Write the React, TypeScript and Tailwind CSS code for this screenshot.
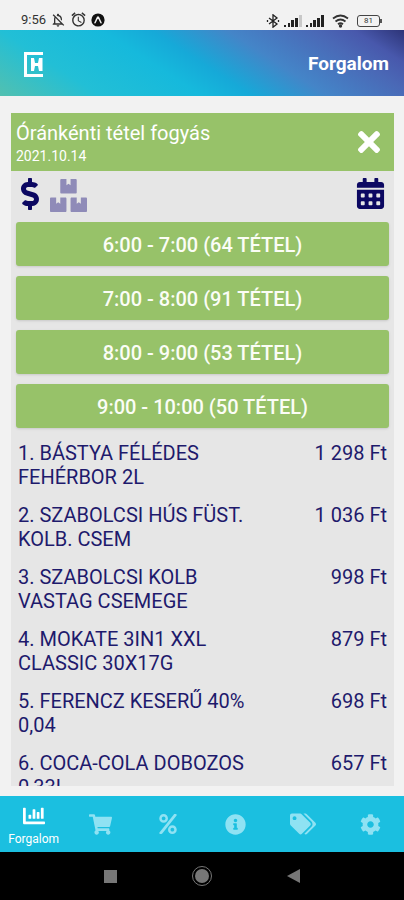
import React from "react";
import {
  FaDollarSign,
  FaBoxes,
  FaTimes,
  FaCalendarAlt,
  FaChartBar,
  FaCog,
  FaInfoCircle,
  FaPercent,
  FaShoppingCart,
  FaTags,
} from "react-icons/fa";
import { MdBluetooth, MdAlarm, MdOutlineNotificationsOff } from "react-icons/md";

const hours = [
  "6:00 - 7:00 (64 TÉTEL)",
  "7:00 - 8:00 (91 TÉTEL)",
  "8:00 - 9:00 (53 TÉTEL)",
  "9:00 - 10:00 (50 TÉTEL)",
];

const items = [
  { name: "1. BÁSTYA FÉLÉDES FEHÉRBOR 2L", price: "1 298 Ft" },
  { name: "2. SZABOLCSI HÚS FÜST. KOLB. CSEM", price: "1 036 Ft" },
  { name: "3. SZABOLCSI KOLB VASTAG CSEMEGE", price: "998 Ft" },
  { name: "4. MOKATE 3IN1 XXL CLASSIC 30X17G", price: "879 Ft" },
  { name: "5. FERENCZ KESERŰ 40% 0,04", price: "698 Ft" },
  { name: "6. COCA-COLA DOBOZOS 0,33L", price: "657 Ft" },
];

const tabs = [
  { label: "Kosár", icon: <FaShoppingCart size={23} /> },
  { label: "Kedvezmény", icon: <FaPercent size={20} /> },
  { label: "Információ", icon: <FaInfoCircle size={21} /> },
  { label: "Címkék", icon: <FaTags size={26} /> },
  { label: "Beállítások", icon: <FaCog size={21} /> },
];

function Signal({ dim }: { dim?: boolean }) {
  return (
    <svg width="18" height="12" viewBox="0 0 18 12" fill="#222" aria-hidden="true">
      <rect x="0" y="10" width="2" height="2" />
      <rect x="4" y="8" width="2" height="4" />
      <rect x="7" y="5" width="3" height="7" />
      <rect x="11" y="3" width="3" height="9" />
      <rect x="15" y="0" width="3" height="12" fill={dim ? "#c8c8c8" : "#222"} />
    </svg>
  );
}

function StatusBar() {
  return (
    <div className="flex h-[30px] shrink-0 items-end justify-between pr-[22px] pb-[2px] pl-[21px] text-[#333]">
      <div className="flex items-center">
        <span className="text-[13px] leading-4">9:56</span>
        <MdOutlineNotificationsOff size={16} className="ml-1" />
        <MdAlarm size={17} className="ml-1" />
        <svg width="14" height="14" viewBox="0 0 14 14" className="ml-1" aria-hidden="true">
          <circle cx="7" cy="7" r="6.6" fill="#111" />
          <path d="M4 9.800 6.600 4.300h.8L10 9.800" fill="none" stroke="#f2f2f2" strokeWidth="1.5" strokeLinecap="round" />
        </svg>
      </div>
      <div className="flex items-center gap-1">
        <svg width="14" height="14" viewBox="0 0 14 14" fill="none" stroke="#222" strokeWidth="1.3" aria-hidden="true">
          <path d="M3 4l8 6-4 3.200V.8L11 4l-8 6" />
          <path d="M1.500 6v2M12.500 6v2" />
        </svg>
        <Signal dim />
        <Signal />
        <svg width="17" height="14" viewBox="0 0 17 14" fill="none" stroke="#333" strokeWidth="1.8" aria-hidden="true" className="ml-1">
          <path d="M1 4.500q7.500-6 15 0M3.500 7.500q5-4 10 0M6 10.300q2.500-2 5 0" />
          <circle cx="8.500" cy="12" r=".8" fill="#333" />
        </svg>
        <div className="ml-1 flex items-center">
          <span className="flex h-3 w-[23px] items-center justify-center rounded-[3px] border border-[#444] text-[8px] leading-none">
            81
          </span>
          <span className="h-1 w-[2px] bg-[#555]" />
        </div>
      </div>
    </div>
  );
}

export default function App() {
  return (
    <div className="flex h-screen flex-col bg-[#f2f2f2] font-[Roboto,'Noto_Sans',sans-serif]">
      <StatusBar />
      <header className="flex h-[66px] shrink-0 items-center justify-between bg-[linear-gradient(33deg,#52c0b0_0%,#22bfd6_20%,#16b9dc_40%,#16a9d8_50%,#4485c8_65%,#4a68b6_82%,#4858ac_90%,#2d3478_100%)] pt-[2px] pr-[15px] pl-6">
        <button type="button" aria-label="Főoldal" className="text-white">
          <svg width="19" height="25" viewBox="0 0 19 25" fill="currentColor" aria-hidden="true">
            <path d="M0 0H19V3H3V22H19V25H0Z" />
            <path d="M7 6h3l1 5h3l1-5h3.500v13H15l-1-5h-3l-1 5H7Z" />
          </svg>
        </button>
        <h1 className="text-[19px] leading-6 font-bold text-white">Forgalom</h1>
      </header>

      <main className="flex min-h-0 flex-1 flex-col pt-[17px] pr-[10px] pb-[10px] pl-[11px]">
        <section className="flex min-h-0 flex-1 flex-col bg-[#e6e6e6]">
          <div className="flex h-[58px] shrink-0 items-center justify-between bg-[#97c269] pr-[9px] pl-[5px] text-white">
            <div className="pt-1">
              <h2 className="text-xl leading-6">Óránkénti tétel fogyás</h2>
              <p className="text-sm leading-[22px]">2021.10.14</p>
            </div>
            <button type="button" aria-label="Bezárás">
              <FaTimes size={32} />
            </button>
          </div>

          <div className="flex h-[51px] shrink-0 items-start justify-between pt-[7px] pr-2 pl-[3px] text-[#0c0862]">
            <div className="flex items-start gap-1">
              <button type="button" aria-label="Érték">
                <FaDollarSign size={32} />
              </button>
              <button type="button" aria-label="Mennyiség" className="text-[#8f8bb8]">
                <FaBoxes size={37} viewBox="0 16 576 512" />
              </button>
            </div>
            <button type="button" aria-label="Dátum">
              <FaCalendarAlt size={31} />
            </button>
          </div>

          <div className="min-h-0 flex-1 overflow-y-auto px-[5px] [scrollbar-width:none]">
            <div className="flex flex-col gap-[10px]">
              {hours.map((hour) => (
                <button
                  key={hour}
                  type="button"
                  className="h-11 rounded-[3px] bg-[#97c269] pt-[2px] text-xl font-medium text-[#fbfdf6] shadow-sm"
                >
                  {hour}
                </button>
              ))}
            </div>
            <ul className="mt-[13px] flex flex-col gap-[14px] px-[2px] text-xl leading-6 text-[#1e1a6c]">
              {items.map((item) => (
                <li key={item.name} className="flex justify-between">
                  <span className="w-[240px]">{item.name}</span>
                  <span className="whitespace-nowrap">{item.price}</span>
                </li>
              ))}
            </ul>
          </div>
        </section>
      </main>

      <nav className="grid h-14 shrink-0 grid-cols-6 bg-[#1bbfe0] text-[#8fe2f3]">
        <button type="button" className="flex flex-col items-center justify-center gap-1 pt-1 text-white">
          <FaChartBar size={22} />
          <span className="text-xs leading-4">Forgalom</span>
        </button>
        {tabs.map((tab) => (
          <button key={tab.label} type="button" aria-label={tab.label} className="flex items-center justify-center">
            {tab.icon}
          </button>
        ))}
      </nav>

      <div className="flex h-12 shrink-0 items-center justify-center gap-[75px] bg-black text-[#777]">
        <button type="button" aria-label="Legutóbbiak" className="size-[13px] bg-current" />
        <button type="button" aria-label="Kezdőképernyő" className="flex size-5 items-center justify-center rounded-full border border-current">
          <span className="size-[14px] rounded-full bg-current" />
        </button>
        <button type="button" aria-label="Vissza">
          <svg width="13" height="14" viewBox="0 0 13 14" fill="currentColor" aria-hidden="true">
            <path d="M13 0v14L0 7Z" />
          </svg>
        </button>
      </div>
    </div>
  );
}
